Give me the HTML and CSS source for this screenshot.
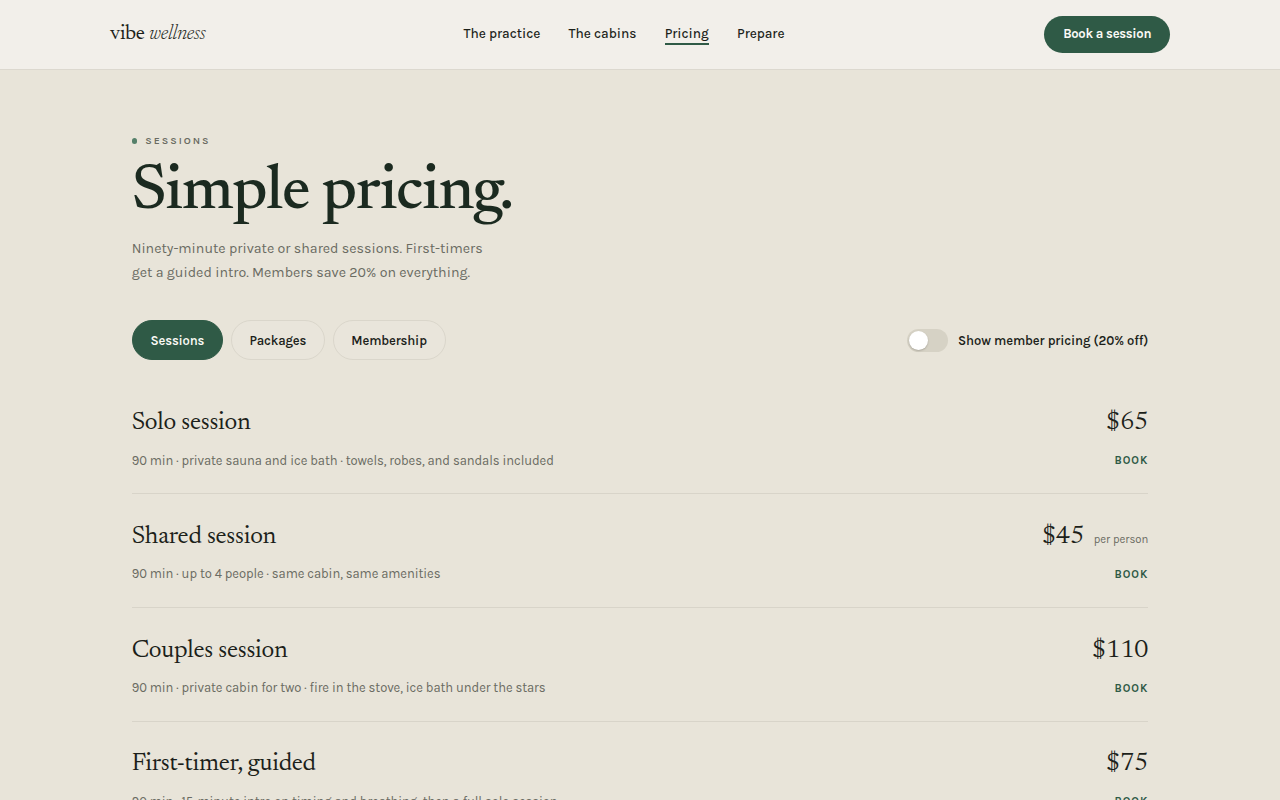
FILE: index.html
```html
<!DOCTYPE html>
<html lang="en">
  <head>
    <meta charset="UTF-8" />
    <meta name="viewport" content="width=device-width, initial-scale=1.0" />
    <title>Pricing | vibe wellness</title>
    <link rel="stylesheet" href="styles.css">
  </head>
  <body>
    <header class="header">
      <div class="header-inner">
        <a href="#" class="logo">vibe <em>wellness</em></a>
        <nav class="nav">
          <a href="#">The practice</a>
          <a href="#">The cabins</a>
          <a href="#" class="active">Pricing</a>
          <a href="#">Prepare</a>
        </nav>
        <a href="#" class="btn">Book a session</a>
      </div>
    </header>

    <main class="container">
      <p class="eyebrow">Sessions</p>
      <h1>Simple pricing.</h1>
      <p class="lede">
        Ninety-minute private or shared sessions. First-timers get a guided
        intro. Members save 20% on everything.
      </p>

      <div class="controls">
        <div class="tabs">
          <button class="tab active">Sessions</button>
          <button class="tab">Packages</button>
          <button class="tab">Membership</button>
        </div>
        <label class="member-toggle">
          <input type="checkbox" />
          <span class="slider"></span>
          Show member pricing (20% off)
        </label>
      </div>

      <div class="price-list">
        <div class="price-row">
          <div>
            <h2>Solo session</h2>
            <p class="desc">90 min · private sauna and ice bath · towels, robes, and sandals included</p>
          </div>
          <div class="price-col">
            <div class="price">$65</div>
            <a href="#" class="book">Book</a>
          </div>
        </div>
        <div class="price-row">
          <div>
            <h2>Shared session</h2>
            <p class="desc">90 min · up to 4 people · same cabin, same amenities</p>
          </div>
          <div class="price-col">
            <div class="price">$45 <small>per person</small></div>
            <a href="#" class="book">Book</a>
          </div>
        </div>
        <div class="price-row">
          <div>
            <h2>Couples session</h2>
            <p class="desc">90 min · private cabin for two · fire in the stove, ice bath under the stars</p>
          </div>
          <div class="price-col">
            <div class="price">$110</div>
            <a href="#" class="book">Book</a>
          </div>
        </div>
        <div class="price-row">
          <div>
            <h2>First-timer, guided</h2>
            <p class="desc">90 min · 15-minute intro on timing and breathing, then a full solo session</p>
          </div>
          <div class="price-col">
            <div class="price">$75</div>
            <a href="#" class="book">Book</a>
          </div>
        </div>
      </div>
    </main>
  </body>
</html>
```
FILE: styles.css
```css
:root {
  --sand: #e8e4d9;
  --cream: #f2efea;
  --ink: #1c1f1a;
  --muted: #6a6b62;
  --green: #2f5a46;
  --line: #d8d4c9;
  --serif: Newsreader, "Liberation Serif", serif;
  --sans: Karla, Roboto, sans-serif;
}

* {
  box-sizing: border-box;
  margin: 0;
  padding: 0;
}

body {
  font-family: var(--sans);
  background: var(--sand);
  color: var(--ink);
  height: 100vh;
  overflow: hidden;
}

a {
  color: inherit;
  text-decoration: none;
}

/* Header */
.header {
  background: var(--cream);
  border-bottom: 1px solid #dcd8cf;
}

.header-inner {
  max-width: 1060px;
  height: 69px;
  margin: 0 auto;
  display: flex;
  align-items: center;
  justify-content: space-between;
}

.logo {
  font-family: var(--serif);
  font-size: 20.8px;
  letter-spacing: -0.015em;
  line-height: 28px;
}

.logo em {
  font-weight: 300;
}

.nav {
  display: flex;
  gap: 28.3px;
  margin-right: 2px;
  font-size: 13.6px;
  font-weight: 500;
  letter-spacing: -0.05px;
}

.nav a {
  line-height: 18px;
  padding-top: 1px;
  border-bottom: 2px solid transparent;
}

.nav a.active {
  border-color: var(--green);
}

.btn {
  background: var(--green);
  color: #fbfaf6;
  font-size: 13px;
  font-weight: 700;
  line-height: 35px;
  letter-spacing: -0.3px;
  padding: 0 18.8px 2px;
  border-radius: 20px;
}

/* Page intro */
.container {
  max-width: 1060px;
  margin: 0 auto;
  padding: 64px 21.7px 0;
}

.eyebrow {
  display: flex;
  align-items: center;
  gap: 8px;
  color: var(--muted);
  font-size: 10.4px;
  font-weight: 600;
  line-height: 14px;
  letter-spacing: 0.19em;
  text-transform: uppercase;
}

.eyebrow::before {
  content: "";
  width: 5.5px;
  height: 5.5px;
  border-radius: 50%;
  background: #55806a;
}

h1 {
  margin-top: 9px;
  color: #1b2a20;
  font-family: var(--serif);
  font-size: 64px;
  font-weight: 500;
  line-height: 72px;
  letter-spacing: -0.02em;
}

.lede {
  max-width: 360px;
  margin-top: 8px;
  color: var(--muted);
  font-size: 14.2px;
  line-height: 24px;
}

/* Tabs and member switch */
.controls {
  display: flex;
  align-items: center;
  justify-content: space-between;
  margin-top: 35px;
}

.tabs {
  display: flex;
  gap: 7.5px;
}

.tab {
  height: 40px;
  padding: 0 17.8px;
  border: 1px solid #dad6cb;
  border-radius: 20px;
  background: #e9e5db;
  color: var(--ink);
  font-family: inherit;
  font-size: 13px;
  font-weight: 600;
  letter-spacing: -0.15px;
}

.tab.active {
  background: var(--green);
  border-color: var(--green);
  color: #fbfaf6;
}

.member-toggle {
  display: flex;
  align-items: center;
  font-size: 13px;
  font-weight: 600;
  letter-spacing: -0.1px;
}

.member-toggle input {
  display: none;
}

.slider {
  width: 41px;
  height: 23px;
  margin: 1px 10.5px 0 0;
  padding: 2px;
  border-radius: 12px;
  background: #d6d2c5;
}

.slider::before {
  content: "";
  display: block;
  width: 19px;
  height: 19px;
  border-radius: 50%;
  background: #fff;
  box-shadow: 0 1px 2px rgba(0, 0, 0, 0.2);
}

/* Price list */
.price-list {
  margin-top: 20.5px;
}

.price-row {
  display: flex;
  justify-content: space-between;
  padding: 26.7px 0 21.9px;
  border-bottom: 1px solid var(--line);
}

h2 {
  font-family: var(--serif);
  font-size: 25.2px;
  font-weight: 400;
  line-height: 32px;
  letter-spacing: -0.01em;
}

.desc {
  margin-top: 11.4px;
  color: var(--muted);
  font-size: 13px;
  line-height: 20px;
  letter-spacing: -0.09px;
}

.price-col {
  display: flex;
  flex-direction: column;
  align-items: flex-end;
}

.price {
  display: flex;
  align-items: baseline;
  gap: 9.5px;
  height: 32px;
  font-family: var(--serif);
  font-size: 25.6px;
  line-height: 32px;
}

.price small {
  color: var(--muted);
  font-family: var(--sans);
  font-size: 11.3px;
  line-height: 16px;
}

.book {
  margin-top: 12.1px;
  color: var(--green);
  font-size: 11.2px;
  font-weight: 700;
  line-height: 20px;
  letter-spacing: 0.09em;
  text-transform: uppercase;
}
```
